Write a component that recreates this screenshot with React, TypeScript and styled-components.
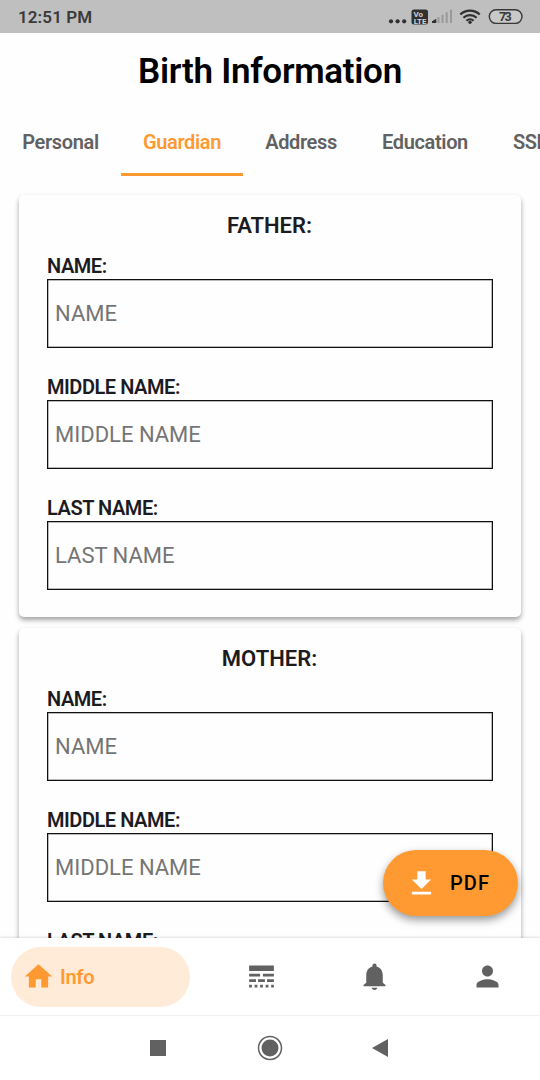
import React from 'react';
import styled, { createGlobalStyle } from 'styled-components';

const ORANGE = '#ff9a33';
const GREY = '#616161';

const GlobalStyle = createGlobalStyle`
  * { box-sizing: border-box; }
  body {
    margin: 0;
    background: #fff;
    font-family: Roboto, "Liberation Sans", sans-serif;
  }
`;

const Screen = styled.div`
  position: relative;
  display: flex;
  flex-direction: column;
  width: 540px;
  height: 1080px;
  overflow: hidden;
  background: #fefefe;
`;

const StatusBar = styled.header`
  display: flex;
  align-items: center;
  justify-content: space-between;
  flex: none;
  height: 33px;
  padding-left: 18px;
  background: #bfbfbf;
  color: #3a3a3a;
`;

const Clock = styled.span`
  font-size: 17px;
  font-weight: 600;
  line-height: 34px;
  letter-spacing: 0.1px;
`;

const Title = styled.h1`
  flex: none;
  margin: 0;
  height: 76px;
  line-height: 77px;
  text-align: center;
  font-size: 35px;
  letter-spacing: -0.28px;
  font-weight: 600;
  color: #000;
`;

const Tabs = styled.nav`
  display: flex;
  flex: none;
  height: 67px;
  overflow: hidden;
`;

const Tab = styled.button<{ $active?: boolean; $width: number }>`
  flex: none;
  width: ${p => p.$width}px;
  padding: 2px 0 0;
  border: 0;
  border-bottom: 3px solid ${p => (p.$active ? ORANGE : 'transparent')};
  background: none;
  font-family: inherit;
  font-size: 20px;
  letter-spacing: -0.36px;
  font-weight: 600;
  line-height: 62px;
  text-align: center;
  color: ${p => (p.$active ? ORANGE : GREY)};
`;

const Content = styled.main`
  display: flex;
  flex-direction: column;
  gap: 11px;
  flex: 1;
  min-height: 0;
  overflow: hidden;
  padding: 19px 19px 0;
`;

const Card = styled.section`
  flex: none;
  height: 422px;
  padding: 0 28px;
  border-radius: 5px;
  background: #fefefe;
  box-shadow: 0 3px 5px rgba(0, 0, 0, 0.36);
`;

const CardTitle = styled.h2`
  margin: 0 1px 0 0;
  height: 58px;
  line-height: 61px;
  text-align: center;
  font-size: 22px;
  font-weight: 600;
  color: #1c1b1f;
`;

const Field = styled.label`
  display: block;
  height: 121px;
`;

const Label = styled.span`
  display: block;
  height: 26px;
  line-height: 26px;
  font-size: 20px;
  letter-spacing: -0.45px;
  font-weight: 600;
  color: #1c1b1f;
`;

const Input = styled.input`
  display: block;
  width: 446px;
  height: 69px;
  padding: 0 7px;
  border: 1px solid #111;
  box-shadow: inset 0 0 0 0.5px #777;
  border-radius: 0;
  outline: none;
  background: transparent;
  font-family: inherit;
  font-size: 22px;
  &::placeholder { color: #757575; opacity: 1; }
`;

const PdfButton = styled.button`
  position: absolute;
  left: 383px;
  top: 850px;
  display: flex;
  align-items: center;
  gap: 12px;
  width: 135px;
  height: 66px;
  padding: 0 0 0 22px;
  border: 0;
  border-radius: 33px;
  background: ${ORANGE};
  box-shadow: 0 4px 9px rgba(0, 0, 0, 0.4);
  font-family: inherit;
  font-size: 20px;
  font-weight: 500;
  letter-spacing: 1.1px;
  color: #000;
  svg { color: #fff; }
`;

const BottomBar = styled.nav`
  position: relative;
  display: flex;
  align-items: center;
  flex: none;
  height: 78px;
  padding-left: 11px;
  background: #fff;
  border-bottom: 1px solid #efefef;
  box-shadow: 0 -1px 2px rgba(0, 0, 0, 0.12);
`;

const ActiveItem = styled.button`
  display: flex;
  align-items: center;
  gap: 5px;
  flex: none;
  width: 179px;
  height: 60px;
  padding: 0 0 0 11px;
  border: 0;
  border-radius: 30px;
  background: #ffebd7;
  font-family: inherit;
  font-size: 20px;
  letter-spacing: -0.3px;
  font-weight: 600;
  color: ${ORANGE};
`;

const NavItem = styled.button`
  display: flex;
  justify-content: center;
  flex: none;
  width: 113px;
  padding: 0;
  border: 0;
  background: none;
  color: ${GREY};
`;

const FirstNavItem = styled(NavItem)`
  margin-left: 15px;
`;

const SystemBar = styled.footer`
  display: flex;
  align-items: center;
  justify-content: center;
  gap: 91px;
  flex: none;
  height: 64px;
  padding-right: 1px;
  background: #fff;
`;

const BackArrow = styled.svg`
  margin: 0 2px 0 -2px;
`;

const Icon = ({ d }: { d: string }) => (
  <svg width="33" height="33" viewBox="0 0 24 24" fill="currentColor">
    <path d={d} />
  </svg>
);

const icons = {
  home: 'M10 20v-6h4v6h5v-8h3L12 3 2 12h3v8z',
  lines:
    'M3 16h5v-2H3v2zm6.5 0h5v-2h-5v2zm6.5 0h5v-2h-5v2zM3 20h2v-2H3v2zm4 0h2v-2H7v2zm4 0h2v-2h-2v2zm4 0h2v-2h-2v2zm4 0h2v-2h-2v2zM3 12h8v-2H3v2zm10 0h8v-2h-8v2zM3 4v4h18V4H3z',
  bell: 'M9.9 20.2h4.2c-.2.9-1 1.6-2.1 1.6s-1.9-.7-2.1-1.6zM18 16.5V11c0-3.07-1.7-5.64-4.5-6.32V4c0-.83-.67-1.5-1.5-1.5s-1.5.67-1.5 1.5v.68C7.7 5.36 6 7.92 6 11v5.5l-2 1.7V19h16v-.8l-2-1.7z',
  person:
    'M12 12c2.21 0 4-1.79 4-4s-1.79-4-4-4-4 1.79-4 4 1.79 4 4 4zm0 2c-2.67 0-8 1.34-8 4v2h16v-2c0-2.66-5.33-4-8-4z',
  download: 'M5 20h14v-2H5v2zM19 9h-4V3H9v6H5l7 7 7-7z',
};

const StatusText = styled.text`
  font-family: Roboto, sans-serif;
  font-weight: 700;
`;

const StatusIcons = () => (
  <svg width="160" height="33" viewBox="380 0 160 33">
    <g fill="#303030">
      <circle cx="391" cy="21.3" r="2.1" />
      <circle cx="397.6" cy="21.3" r="2.1" />
      <circle cx="404.2" cy="21.3" r="2.1" />
      <rect x="411.5" y="9.5" width="16.5" height="15" rx="2.5" />
      <path d="M432 23v-1.8l4.3-2.4V23z" />
    </g>
    <StatusText x="413.5" y="16.6" fontSize="8" fill="#d2d2d2">Vo</StatusText>
    <StatusText x="413.7" y="23.5" fontSize="8" fill="#d2d2d2" textLength="12.8">LTE</StatusText>
    <g fill="#999">
      <rect x="437.5" y="17" width="2" height="6" />
      <rect x="441.5" y="14.8" width="2" height="8.2" />
      <rect x="445.7" y="12.3" width="2" height="10.7" />
      <rect x="450" y="9.7" width="2" height="13.3" />
    </g>
    <g fill="none" stroke="#303030" strokeWidth="2.2">
      <path d="M460.3 14.5a14 14 0 0 1 19.4 0" />
      <path d="M463.4 17.8a9.6 9.6 0 0 1 13.2 0" />
      <path d="M466.4 20.7a5.4 5.4 0 0 1 7.2 0" />
    </g>
    <circle cx="470" cy="22.2" r="1.7" fill="#303030" />
    <rect x="489.3" y="9.8" width="32.7" height="13.6" rx="6.8" fill="#c9c9c9" stroke="#383838" strokeWidth="1.4" />
    <StatusText x="505.3" y="21" fontSize="12.5" textAnchor="middle" fill="#383838" textLength="12.5">73</StatusText>
  </svg>
);

const tabs = [
  { name: 'Personal', width: 121 },
  { name: 'Guardian', width: 122 },
  { name: 'Address', width: 116 },
  { name: 'Education', width: 132 },
  { name: 'SSLC', width: 90 },
];

const fields = ['NAME', 'MIDDLE NAME', 'LAST NAME'];

const PersonCard = ({ title }: { title: string }) => (
  <Card>
    <CardTitle>{title}</CardTitle>
    {fields.map(name => (
      <Field key={name}>
        <Label>{name}:</Label>
        <Input placeholder={name} />
      </Field>
    ))}
  </Card>
);

export default function App() {
  return (
    <>
      <GlobalStyle />
      <Screen>
        <StatusBar>
          <Clock>12:51 PM</Clock>
          <StatusIcons />
        </StatusBar>
        <Title>Birth Information</Title>
        <Tabs>
          {tabs.map(t => (
            <Tab key={t.name} $width={t.width} $active={t.name === 'Guardian'}>
              {t.name}
            </Tab>
          ))}
        </Tabs>
        <Content>
          <PersonCard title="FATHER:" />
          <PersonCard title="MOTHER:" />
        </Content>
        <PdfButton>
          <Icon d={icons.download} />
          PDF
        </PdfButton>
        <BottomBar>
          <ActiveItem>
            <Icon d={icons.home} />
            Info
          </ActiveItem>
          <FirstNavItem>
            <Icon d={icons.lines} />
          </FirstNavItem>
          <NavItem>
            <Icon d={icons.bell} />
          </NavItem>
          <NavItem>
            <Icon d={icons.person} />
          </NavItem>
        </BottomBar>
        <SystemBar>
          <svg width="16" height="16">
            <rect width="16" height="16" fill={GREY} />
          </svg>
          <svg width="26" height="26">
            <circle cx="13" cy="13" r="11.5" fill="none" stroke={GREY} strokeWidth="1.5" />
            <circle cx="13" cy="13" r="8.5" fill={GREY} />
          </svg>
          <BackArrow width="16" height="18">
            <path d="M0 9 16 0v18z" fill={GREY} />
          </BackArrow>
        </SystemBar>
      </Screen>
    </>
  );
}
